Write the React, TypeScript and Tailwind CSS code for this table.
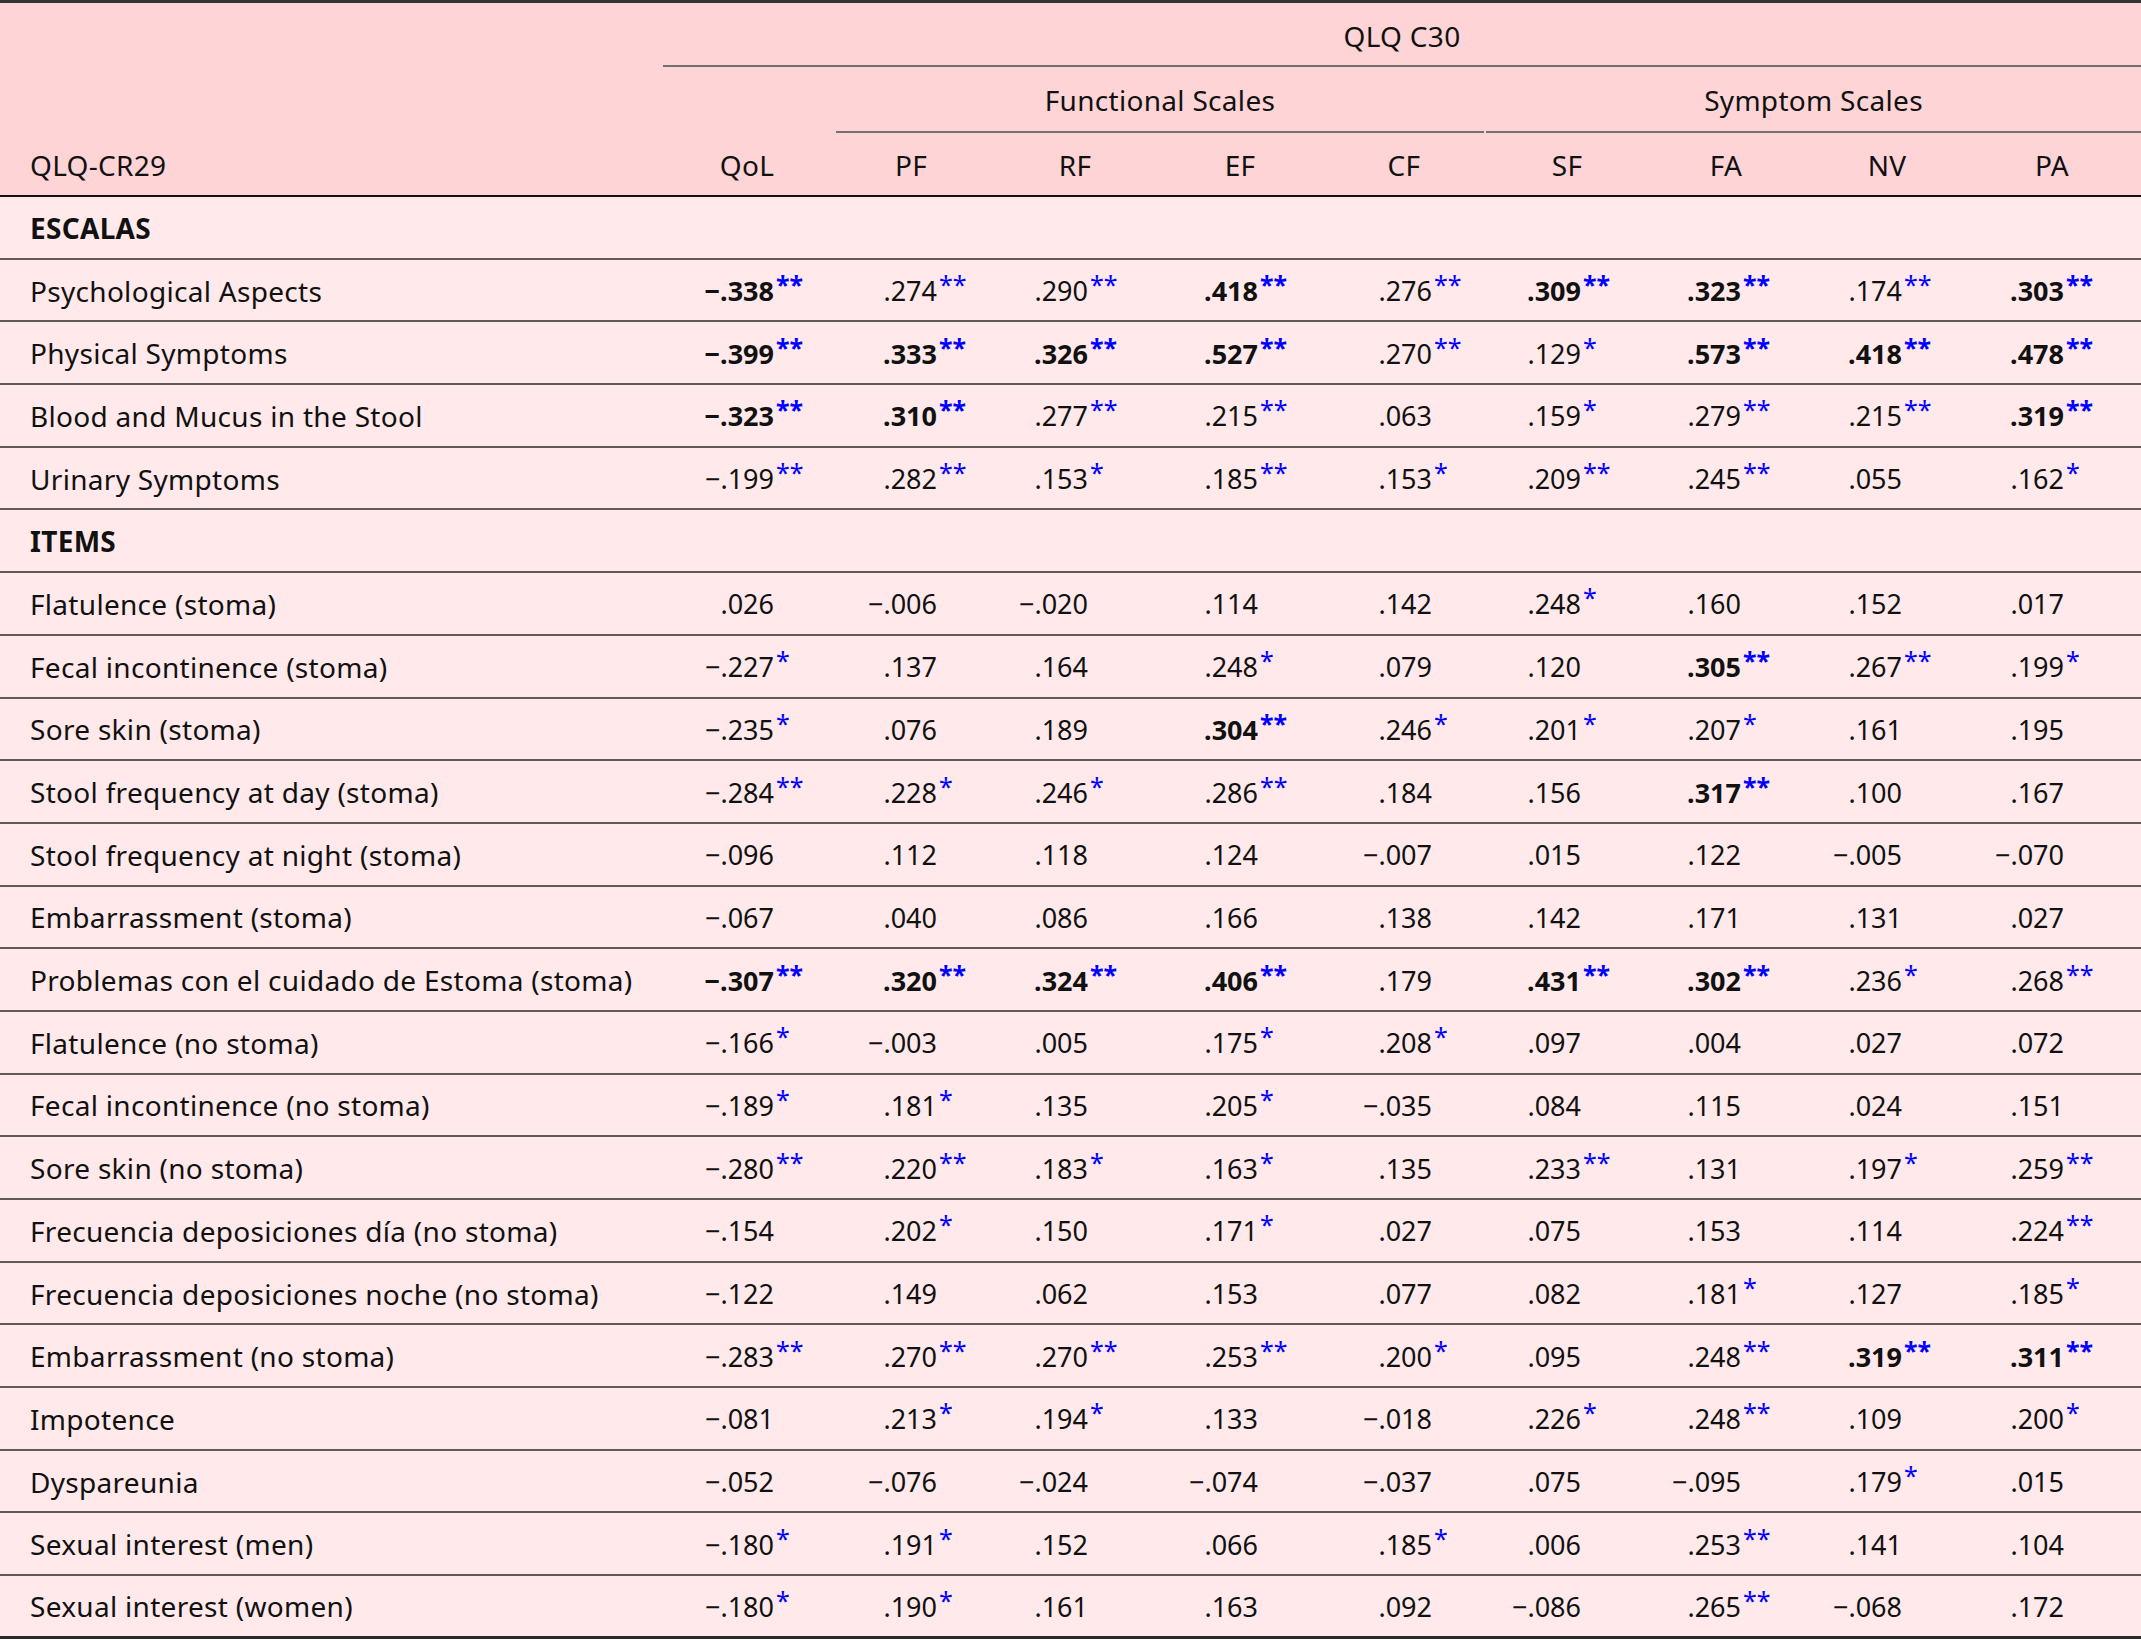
import React from "react";

// "!" at the end marks a bold cell, trailing "*" are significance stars
type Row = { label: string; section?: boolean; cells?: string[] };

const rows: Row[] = [
  { label: "ESCALAS", section: true },
  { label: "Psychological Aspects", cells: ["-.338**!", ".274**", ".290**", ".418**!", ".276**", ".309**!", ".323**!", ".174**", ".303**!"] },
  { label: "Physical Symptoms", cells: ["-.399**!", ".333**!", ".326**!", ".527**!", ".270**", ".129*", ".573**!", ".418**!", ".478**!"] },
  { label: "Blood and Mucus in the Stool", cells: ["-.323**!", ".310**!", ".277**", ".215**", ".063", ".159*", ".279**", ".215**", ".319**!"] },
  { label: "Urinary Symptoms", cells: ["-.199**", ".282**", ".153*", ".185**", ".153*", ".209**", ".245**", ".055", ".162*"] },
  { label: "ITEMS", section: true },
  { label: "Flatulence (stoma)", cells: [".026", "-.006", "-.020", ".114", ".142", ".248*", ".160", ".152", ".017"] },
  { label: "Fecal incontinence (stoma)", cells: ["-.227*", ".137", ".164", ".248*", ".079", ".120", ".305**!", ".267**", ".199*"] },
  { label: "Sore skin (stoma)", cells: ["-.235*", ".076", ".189", ".304**!", ".246*", ".201*", ".207*", ".161", ".195"] },
  { label: "Stool frequency at day (stoma)", cells: ["-.284**", ".228*", ".246*", ".286**", ".184", ".156", ".317**!", ".100", ".167"] },
  { label: "Stool frequency at night (stoma)", cells: ["-.096", ".112", ".118", ".124", "-.007", ".015", ".122", "-.005", "-.070"] },
  { label: "Embarrassment (stoma)", cells: ["-.067", ".040", ".086", ".166", ".138", ".142", ".171", ".131", ".027"] },
  { label: "Problemas con el cuidado de Estoma (stoma)", cells: ["-.307**!", ".320**!", ".324**!", ".406**!", ".179", ".431**!", ".302**!", ".236*", ".268**"] },
  { label: "Flatulence (no stoma)", cells: ["-.166*", "-.003", ".005", ".175*", ".208*", ".097", ".004", ".027", ".072"] },
  { label: "Fecal incontinence (no stoma)", cells: ["-.189*", ".181*", ".135", ".205*", "-.035", ".084", ".115", ".024", ".151"] },
  { label: "Sore skin (no stoma)", cells: ["-.280**", ".220**", ".183*", ".163*", ".135", ".233**", ".131", ".197*", ".259**"] },
  { label: "Frecuencia deposiciones día (no stoma)", cells: ["-.154", ".202*", ".150", ".171*", ".027", ".075", ".153", ".114", ".224**"] },
  { label: "Frecuencia deposiciones noche (no stoma)", cells: ["-.122", ".149", ".062", ".153", ".077", ".082", ".181*", ".127", ".185*"] },
  { label: "Embarrassment (no stoma)", cells: ["-.283**", ".270**", ".270**", ".253**", ".200*", ".095", ".248**", ".319**!", ".311**!"] },
  { label: "Impotence", cells: ["-.081", ".213*", ".194*", ".133", "-.018", ".226*", ".248**", ".109", ".200*"] },
  { label: "Dyspareunia", cells: ["-.052", "-.076", "-.024", "-.074", "-.037", ".075", "-.095", ".179*", ".015"] },
  { label: "Sexual interest (men)", cells: ["-.180*", ".191*", ".152", ".066", ".185*", ".006", ".253**", ".141", ".104"] },
  { label: "Sexual interest (women)", cells: ["-.180*", ".190*", ".161", ".163", ".092", "-.086", ".265**", "-.068", ".172"] },
];

// column labels, with a nudge so they sit over the figures
const headers = [
  { label: "QoL", cls: "" },
  { label: "PF", cls: "" },
  { label: "RF", cls: "" },
  { label: "EF", cls: "pl-[2px]" },
  { label: "CF", cls: "pl-[2px]" },
  { label: "SF", cls: "" },
  { label: "FA", cls: "pr-[10px]" },
  { label: "NV", cls: "pr-[16px]" },
  { label: "PA", cls: "pr-[14px]" },
];

// where the digits end inside each column (decimal alignment)
const numWidth = [
  "w-[109px]",
  "w-[108px]",
  "w-[95px]",
  "w-[101px]",
  "w-[111px]",
  "w-[96px]",
  "w-[92px]",
  "w-[89px]",
  "w-[87px]",
];

const gridCols = "grid grid-cols-[665px_repeat(9,164px)]";

const Value = ({ v, col }: { v: string; col: number }) => {
  const bold = v.endsWith("!");
  const raw = bold ? v.slice(0, -1) : v;
  const stars = raw.match(/\*+$/)?.[0] ?? "";
  const num = raw.slice(0, raw.length - stars.length).replace("-", "\u2212");
  return (
    <div className={`flex items-center text-[27px] tracking-normal ${bold ? "font-bold" : ""}`}>
      <span className={`${numWidth[col]} shrink-0 text-right`}>{num}</span>
      {stars && (
        <span className="relative -top-[6px] ml-[2px] text-[25px] leading-none text-[#0000ff]">{stars}</span>
      )}
    </div>
  );
};

const App: React.FC = () => {
  return (
    <div
      className="w-[2141px] text-[28px] tracking-[0.3px] text-[#111] leading-none"
      style={{ fontFamily: '"Noto Sans", "Liberation Sans", sans-serif' }}
    >
      {/* Header */}
      <div className="border-t-[3px] border-[#333] bg-[#ffd4d6]">
        <div className={`${gridCols} h-[64px]`}>
          <div />
          <div className="col-span-9 -ml-[2px] flex items-center justify-center border-b-2 border-[#757070] pt-[3px]">
            QLQ C30
          </div>
        </div>
        <div className={`${gridCols} h-[66px]`}>
          <div />
          <div />
          <div className="col-span-4 ml-[7px] mr-[1px] flex items-center justify-center border-b-2 border-[#757070] pt-[2px]">
            Functional Scales
          </div>
          <div className="col-span-4 ml-[1px] flex items-center justify-center border-b-2 border-[#757070] pt-[2px]">
            Symptom Scales
          </div>
        </div>
        <div className={`${gridCols} h-[64px] border-b-2 border-[#111] pt-[2px]`}>
          <div className="flex items-center pl-[30px]">QLQ-CR29</div>
          {headers.map((h) => (
            <div key={h.label} className={`flex items-center justify-center ${h.cls}`}>
              {h.label}
            </div>
          ))}
        </div>
      </div>

      {/* Body */}
      <div className="bg-[#ffe9ea]">
        {rows.map((row, i) => {
          const last = i === rows.length - 1;
          return (
            <div
              key={row.label}
              className={`${gridCols} h-[62.7px] pt-[1px] ${
                last ? "border-b-[3px] border-[#2a2a2a]" : "border-b-2 border-[#5e5a5a]"
              }`}
            >
              <div className={`flex items-center pl-[30px] whitespace-nowrap ${row.section ? "font-bold" : ""}`}>
                {row.label}
              </div>
              {row.cells?.map((c, j) => (
                <Value key={j} v={c} col={j} />
              ))}
            </div>
          );
        })}
      </div>
    </div>
  );
};

export default App;
